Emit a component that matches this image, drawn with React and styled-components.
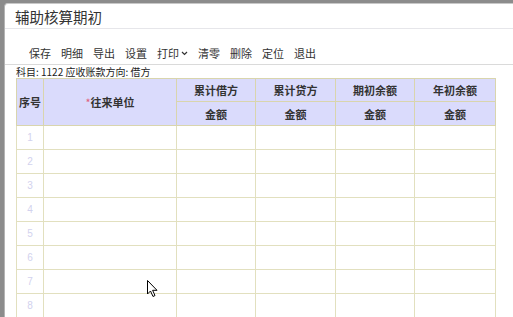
import React from 'react';
import styled, { createGlobalStyle } from 'styled-components';

const Global = createGlobalStyle`
  html, body {
    margin: 0;
    padding: 0;
    background: #8c8c8c;
    overflow: hidden;
  }
  body {
    font-family: "Noto Sans CJK SC", "Liberation Sans", sans-serif;
  }
`

const Page = styled.div`
  width: 513px;
  height: 317px;
  padding: 3px 0 0 4px;
  box-sizing: border-box;
  position: relative;
  overflow: hidden;
`

const Window = styled.div`
  background: #ffffff;
  height: 100%;
  border-top-left-radius: 4px;
  border-left: 1px solid #b4b4b4;
  border-top: 1px solid #c8c8c8;
  box-sizing: border-box;
`

const TitleBar = styled.div`
  height: 24px;
  padding-left: 10px;
  display: flex;
  align-items: center;
  font-size: 14.5px;
  color: #333333;
  border-bottom: 1px solid #e6e6ea;
`

const Toolbar = styled.div`
  height: 36px;
  display: flex;
  align-items: flex-end;
  padding: 0 0 4px 24px;
  gap: 10px;
  box-sizing: border-box;
  border-bottom: 1px solid #dadada;
`

const ToolItem = styled.span`
  font-size: 11px;
  color: #333333;
  display: flex;
  align-items: center;
  gap: 2px;
  line-height: 14px;
`

const Info = styled.div`
  font-size: 10px;
  color: #222222;
  padding-left: 11px;
  height: 13px;
  line-height: 14px;
`

const Grid = styled.table`
  margin-left: 11px;
  border-collapse: collapse;
  table-layout: fixed;
  width: 479px;
`

const Head = styled.th`
  background: #dadbfc;
  border: 1px solid #d9d5ad;
  font-size: 11px;
  font-weight: bold;
  color: #333333;
  height: ${p => p.$h || 22}px;
  padding: 0;
  text-align: center;
`

const Star = styled.span`
  color: #e0607a;
  font-weight: normal;
`

const Cell = styled.td`
  border: 1px solid #e2e0bf;
  height: 23px;
  padding: 0;
  font-size: 10px;
  color: #d2d2ee;
  text-align: center;
  font-family: "Liberation Sans", sans-serif;
`

const Cursor = styled.svg`
  position: absolute;
  left: 147px;
  top: 280px;
`

const tools = ['保存', '明细', '导出', '设置', '打印', '清零', '删除', '定位', '退出']
const widths = [27, 133, 79, 80, 79, 81]

function App() {
  const rows = [1, 2, 3, 4, 5, 6, 7, 8]
  return (
    <Page>
      <Global />
      <Window>
        <TitleBar>辅助核算期初</TitleBar>
        <Toolbar>
          {tools.map(t => (
            <ToolItem key={t}>
              {t}
              {t === '打印' && (
                <svg width="7" height="5" viewBox="0 0 7 5">
                  <path d="M1 1 L3.5 3.5 L6 1" fill="none" stroke="#333" strokeWidth="1.2" />
                </svg>
              )}
            </ToolItem>
          ))}
        </Toolbar>
        <Info>科目: 1122 应收账款方向: 借方</Info>
        <Grid>
          <colgroup>
            {widths.map((w, i) => <col key={i} style={{ width: w }} />)}
          </colgroup>
          <thead>
            <tr>
              <Head rowSpan={2}>序号</Head>
              <Head rowSpan={2}><Star>*</Star>往来单位</Head>
              <Head>累计借方</Head>
              <Head>累计贷方</Head>
              <Head>期初余额</Head>
              <Head>年初余额</Head>
            </tr>
            <tr>
              <Head $h={23}>金额</Head>
              <Head $h={23}>金额</Head>
              <Head $h={23}>金额</Head>
              <Head $h={23}>金额</Head>
            </tr>
          </thead>
          <tbody>
            {rows.map(n => (
              <tr key={n}>
                <Cell>{n}</Cell>
                <Cell />
                <Cell />
                <Cell />
                <Cell />
                <Cell />
              </tr>
            ))}
          </tbody>
        </Grid>
      </Window>
      <Cursor width="12" height="18" viewBox="0 0 12 18">
        <path d="M0.5 0.5 L0.5 14 L3.5 11 L6 16.5 L8 15.5 L5.6 10.3 L10 10.3 Z" fill="#ffffff" stroke="#000" strokeWidth="1" strokeLinejoin="round" />
      </Cursor>
    </Page>
  );
}

export default App;
